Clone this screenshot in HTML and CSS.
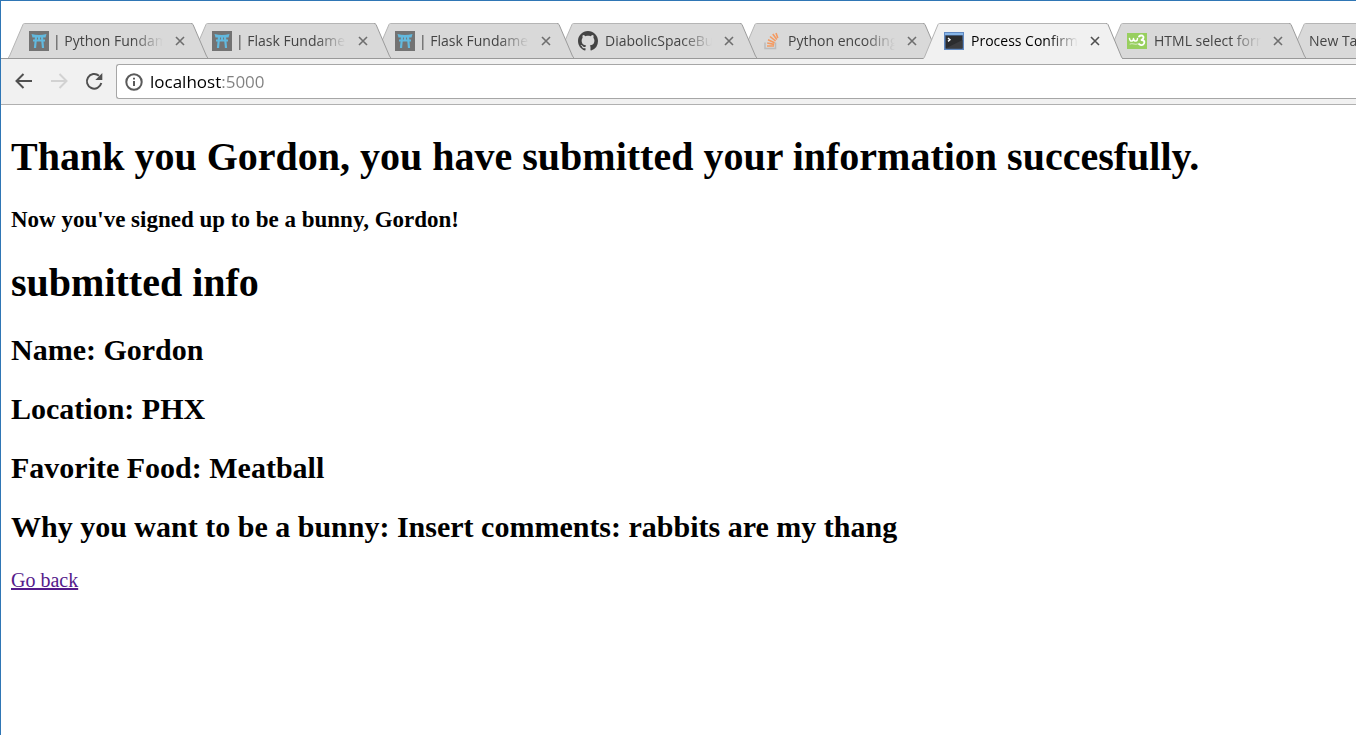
FILE: index.html
```html
<!DOCTYPE html>
<html lang="en">
<head>
<meta charset="utf-8">
<title>Process Confirmation</title>
<link rel="stylesheet" href="styles.css">
</head>
<body>
<svg class="defs" aria-hidden="true">
  <symbol id="tab-shape" viewBox="0 0 200 36" preserveAspectRatio="none">
    <path class="tab-fill" d="M0 36 L1.500 34 L15 1.500 Q15.500 .5 16.500 .5 H183 Q184.500 .5 185 1.500 L198.500 34 L200 36 Z"/>
    <path class="tab-top" d="M0 36 L1.500 34 L15 1.500 Q15.500 .5 16.500 .5 H183"/>
    <path class="tab-side" d="M183 .5 Q184.500 .5 185 1.500 L198.500 34 L200 36"/>
  </symbol>
  <symbol id="gate" viewBox="0 0 20 20">
    <rect width="20" height="20" fill="#737373"/>
    <path d="M2.500 3 Q10 5 17.500 3 L16.500 6.500 H3.500 Z M4 8.500 H16 V10.500 H4 Z" fill="#62b9de"/>
    <path d="M7 6 L6 17 M13 6 L14 17 M10 6 V10" stroke="#62b9de" stroke-width="2.200" fill="none"/>
  </symbol>
  <symbol id="close" viewBox="0 0 10 10">
    <path d="M1 1 L9 9 M9 1 L1 9" stroke="currentColor" stroke-width="1.600" fill="none"/>
  </symbol>
</svg>

<div class="window">
  <nav class="tabs" aria-label="Open tabs">
    <div class="tab t1">
      <svg class="shape"><use href="#tab-shape"/></svg>
      <svg class="icon"><use href="#gate"/></svg>
      <span class="label wide">| Python Fundamentals</span>
      <button class="close" aria-label="Close tab"><svg><use href="#close"/></svg></button>
    </div>
    <div class="tab t2">
      <svg class="shape"><use href="#tab-shape"/></svg>
      <svg class="icon"><use href="#gate"/></svg>
      <span class="label wide">| Flask Fundamentals</span>
      <button class="close" aria-label="Close tab"><svg><use href="#close"/></svg></button>
    </div>
    <div class="tab t3">
      <svg class="shape"><use href="#tab-shape"/></svg>
      <svg class="icon"><use href="#gate"/></svg>
      <span class="label wide">| Flask Fundamentals</span>
      <button class="close" aria-label="Close tab"><svg><use href="#close"/></svg></button>
    </div>
    <div class="tab t4">
      <svg class="shape"><use href="#tab-shape"/></svg>
      <svg class="icon" viewBox="0 0 16 16"><path fill="#444" d="M8 0C3.580 0 0 3.580 0 8c0 3.540 2.290 6.530 5.470 7.590.4.070.55-.17.55-.38 0-.19-.01-.82-.01-1.490-2.010.37-2.530-.49-2.690-.94-.09-.23-.48-.94-.82-1.130-.28-.15-.68-.52-.01-.53.63-.01 1.080.58 1.230.82.72 1.210 1.870.87 2.330.66.07-.52.28-.87.51-1.070-1.780-.2-3.640-.89-3.640-3.950 0-.87.31-1.590.82-2.150-.08-.2-.36-1.020.08-2.120 0 0 .67-.21 2.200.82.64-.18 1.320-.27 2-.27s1.360.09 2 .27c1.530-1.040 2.200-.82 2.200-.82.44 1.100.16 1.920.08 2.120.51.56.82 1.270.82 2.150 0 3.070-1.870 3.750-3.650 3.950.29.25.54.73.54 1.480 0 1.070-.01 1.930-.01 2.200 0 .21.15.46.55.38A8.010 8.010 0 0 0 16 8c0-4.420-3.580-8-8-8z"/></svg>
      <span class="label">DiabolicSpaceBunny</span>
      <button class="close" aria-label="Close tab"><svg><use href="#close"/></svg></button>
    </div>
    <div class="tab t5">
      <svg class="shape"><use href="#tab-shape"/></svg>
      <svg class="icon" viewBox="0 0 20 20" fill="none">
        <path d="M4 11.500 V17.500 H14.500 V11.500" stroke="#bcbbbb" stroke-width="1.500"/>
        <path d="M6 15 H13 M6.200 12 L13.200 13.400 M7 8.800 L13.600 11.800 M9 5.500 L14.600 10 M11.800 3 L15.800 8.500 M15 2 L16.800 7" stroke="#f49a61" stroke-width="1.600"/>
      </svg>
      <span class="label">Python encoding</span>
      <button class="close" aria-label="Close tab"><svg><use href="#close"/></svg></button>
    </div>
    <div class="tab active" aria-current="page">
      <svg class="shape"><use href="#tab-shape"/></svg>
      <svg class="icon" viewBox="0 0 20 20">
        <rect y="1" width="20" height="18" fill="#6089c2"/>
        <rect x="1" y="2" width="18" height="2" fill="#86b5e8"/>
        <rect x="1.500" y="4.500" width="17" height="13" fill="#2b2c2e"/>
        <path d="M1.500 17.500 L18.500 9 V17.500 Z" fill="#3b3c3f"/>
        <path d="M4 7 L6 8.700 L4 10.400" stroke="#fff" stroke-width="1.400" fill="none"/>
      </svg>
      <span class="label">Process Confirmation</span>
      <button class="close" aria-label="Close tab"><svg><use href="#close"/></svg></button>
    </div>
    <div class="tab t7">
      <svg class="shape"><use href="#tab-shape"/></svg>
      <svg class="icon" viewBox="0 0 20 20" fill="none" stroke="#fff" stroke-linecap="round" stroke-linejoin="round">
        <rect y="2" width="20" height="16" fill="#98cf5f" stroke="none"/>
        <path d="M2.500 7.500 Q3 10.500 5 10 Q6.500 9.500 6.500 7.500 Q7 10.500 9 10 Q10.500 9.500 10.500 7.500" stroke-width="1.500"/>
        <path d="M12 5.500 Q13.500 4 15.500 4.700 Q18 6.500 14.500 9 Q18.500 9.500 17 12.500 Q15 15.500 12 13" stroke-width="1.800"/>
        <path d="M3 13 Q5 12.300 7 13 T10.500 13" stroke-width="1" opacity=".6"/>
      </svg>
      <span class="label">HTML select form</span>
      <button class="close" aria-label="Close tab"><svg><use href="#close"/></svg></button>
    </div>
    <div class="tab t8">
      <svg class="shape"><use href="#tab-shape"/></svg>
      <span class="label plain">New Tab</span>
    </div>
  </nav>

  <div class="toolbar">
    <button class="nav" aria-label="Back"><svg viewBox="0 0 20 20"><path d="M18 9 H3 M9.500 2 L2.500 9 L9.500 16"/></svg></button>
    <button class="nav" aria-label="Forward" disabled><svg viewBox="0 0 20 20"><path d="M2 9 H17 M10.500 2 L17.500 9 L10.500 16"/></svg></button>
    <button class="nav" aria-label="Reload"><svg viewBox="0 0 20 20"><path d="M17.300 11 A7.300 7.300 0 1 1 15 3.800"/><path class="solid" d="M18.300 1 V8 H11.300 Z"/></svg></button>
    <div class="address">
      <svg class="info" viewBox="0 0 18 18"><circle cx="9" cy="9" r="7.700"/><path d="M9 8 V13 M9 4.800 V6.600"/></svg>
      <input class="url" type="text" aria-label="Address" value="localhost:5000">
    </div>
  </div>

  <main class="page">
    <h1>Thank you Gordon, you have submitted your information succesfully.</h1>
    <h3>Now you've signed up to be a bunny, Gordon!</h3>
    <h1>submitted info</h1>
    <h2>Name: Gordon</h2>
    <h2>Location: PHX</h2>
    <h2>Favorite Food: Meatball</h2>
    <h2>Why you want to be a bunny: Insert comments: rabbits are my thang</h2>
    <a class="back" href="#">Go back</a>
  </main>
</div>
</body>
</html>
```
FILE: styles.css
```css
* { box-sizing: border-box; }

body {
  margin: 0;
  background: #fff;
  color: #000;
  font-family: "Liberation Serif", "Times New Roman", serif;
}

button {
  padding: 0;
  border: 0;
  background: none;
  color: inherit;
}

.defs {
  position: absolute;
  width: 0;
  height: 0;
}

.window {
  min-height: 100vh;
  border-top: 1px solid #2f76b5;
  border-left: 1px solid #2f76b5;
  overflow: hidden;
}

/* Tab strip */
.tabs {
  display: flex;
  padding: 22px 0 0 7px;
  border-bottom: 1px solid #999;
  font-family: "Open Sans", "Segoe UI", sans-serif;
  font-size: 14px;
}

.tab {
  position: relative;
  flex: none;
  display: flex;
  align-items: center;
  width: 200px;
  height: 35px;
  margin-right: -17px;
  padding-left: 21px;
  color: #444;
}

.t1 { z-index: 7; }
.t2 { z-index: 6; }
.t3 { z-index: 5; }
.t4 { z-index: 4; }
.t5 { z-index: 3; }
.t7 { z-index: 2; }
.t8 { z-index: 1; }

.active {
  z-index: 8;
  height: 36px;
  margin-bottom: -1px;
  color: #000;
}

.shape {
  position: absolute;
  inset: 0;
  width: 100%;
  height: 100%;
  z-index: -1;
}

.tab-fill { fill: var(--fill, #d9d9d9); }
.active .shape { --fill: #f1f1f1; }
.tab-top { fill: none; stroke: #b4b4b4; }
.tab-side { fill: none; stroke: #999; }

.icon {
  flex: none;
  width: 20px;
  height: 20px;
}

.label {
  flex: none;
  width: 107px;
  margin-left: 7px;
  overflow: hidden;
  white-space: nowrap;
  line-height: 20px;
  -webkit-mask-image: linear-gradient(to left, transparent, #000 30px);
  mask-image: linear-gradient(to left, transparent, #000 30px);
}

.wide {
  width: 110px;
  margin-left: 4px;
}

.plain { margin-left: -1px; }

.close {
  display: flex;
  margin-left: 12px;
  color: #6e6e6e;
}

.active .close { color: #505050; }

.close svg {
  width: 10px;
  height: 10px;
}

/* Toolbar */
.toolbar {
  display: flex;
  align-items: center;
  padding: 5px 0 5px 13px;
  background: #f1f1f1;
  border-bottom: 1px solid #b0b0b0;
}

.nav {
  display: flex;
  margin-right: 15px;
}

.nav svg {
  width: 20px;
  height: 20px;
  fill: none;
  stroke: #505050;
  stroke-width: 2;
}

.nav .solid { fill: #505050; stroke: none; }
.nav:disabled svg { stroke: #d2d2d2; }

.address {
  flex: 1;
  display: flex;
  align-items: center;
  gap: 7px;
  height: 35px;
  margin-left: -3px;
  padding-left: 8px;
  background: #fff;
  border: 1px solid #a6a6a6;
  border-right: 0;
  border-radius: 3px 0 0 3px;
}

.info {
  width: 18px;
  height: 18px;
  fill: none;
  stroke: #5a5a5a;
  stroke-width: 2;
}

.url {
  flex: 1;
  padding: 0;
  border: 0;
  outline: 0;
  font: 17px/24px "Open Sans", "Segoe UI", sans-serif;
  color: transparent;
  caret-color: #000;
  background: linear-gradient(to right, #000 71px, #808080 71px);
  -webkit-background-clip: text;
  background-clip: text;
}

/* Document */
.page {
  padding: 2px 10px 10px;
  font-size: 20px;
}

h1 {
  margin: 27px 0;
  font-size: 40px;
  line-height: 46px;
}

h2 {
  margin: 25px 0;
  font-size: 30px;
  line-height: 34px;
}

h3 {
  margin: 24px 0;
  font-size: 23px;
  line-height: 26px;
}

.back {
  color: #551a8b;
  line-height: 22px;
}
```
